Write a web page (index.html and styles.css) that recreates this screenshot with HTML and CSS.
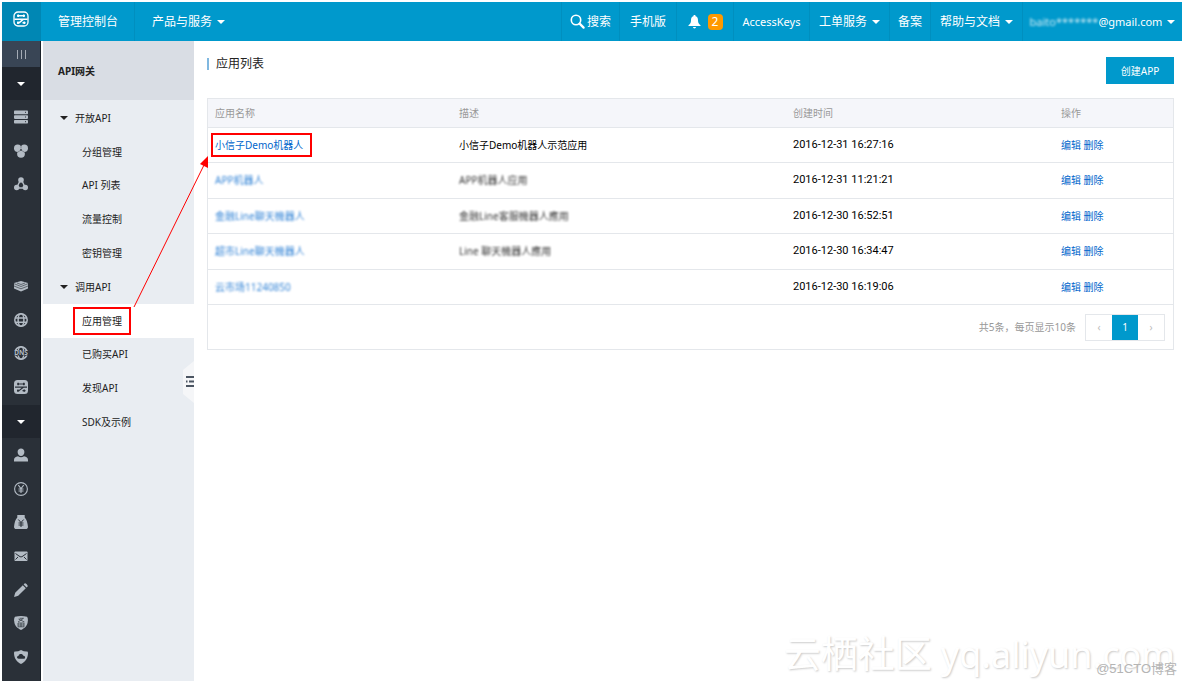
FILE: index.html
```html
<!DOCTYPE html>
<html lang="zh-CN">
<head>
<meta charset="utf-8">
<title>API网关 - 应用列表</title>
<link rel="stylesheet" href="styles.css">
</head>
<body>
<header class="topbar">
  <a class="logo" href="#" aria-label="首页">
    <svg width="16" height="16" viewBox="0 0 16 16" fill="none" stroke="#fff"><rect x="1" y="1" width="14" height="14" rx="4" stroke-width="1.300"/><path d="M4 4.800h8M1.500 8.200h13M4 11.800h2.500M9.500 11.800h3M10.500 8.200L6 11.800" stroke-width="1.500"/><path d="M5.200 3.500v2.600M10.800 3.500v2.600M5 10.500v2.400M11.300 10.500v2.400" stroke-width="1.600"/></svg>
  </a>
  <a class="nav-item console" href="#">管理控制台</a>
  <button class="nav-item products">产品与服务<span class="caret"></span></button>
  <nav class="nav-right">
    <button class="nav-item search"><svg width="15" height="15" viewBox="0 0 15 15" fill="none" stroke="#fff" stroke-linecap="round"><circle cx="6" cy="6" r="4.700" stroke-width="1.600"/><path d="M9.600 9.600l4 4" stroke-width="2.200"/></svg>搜索</button>
    <a class="nav-item phone" href="#">手机版</a>
    <a class="nav-item bell" href="#"><svg width="13" height="14" viewBox="0 0 13 14" fill="#fff"><path d="M6.500 0c.8 0 1.100.6 1.100 1.200C9.500 1.700 10 3.500 10 5.500c0 2.500.8 3.500 2.500 4.800V11H.5v-.7C2.200 9 3 8 3 5.500c0-2 .5-3.800 2.400-4.300C5.400.6 5.700 0 6.500 0zM5 12h3c0 .8-.7 1.400-1.500 1.400S5 12.800 5 12z"/></svg><span class="badge">2</span></a>
    <a class="nav-item keys latin" href="#">AccessKeys</a>
    <button class="nav-item tickets">工单服务<span class="caret"></span></button>
    <a class="nav-item record" href="#">备案</a>
    <button class="nav-item help">帮助与文档<span class="caret"></span></button>
    <button class="nav-item user latin"><span><span class="masked">baito*******</span>@gmail.com</span><span class="caret"></span></button>
  </nav>
</header>
<div class="layout">
  <aside class="rail">
    <button class="rail-toggle" aria-label="折叠"><i></i><i></i><i></i></button>
    <button class="rail-caret" aria-label="产品"><span class="caret"></span></button>
    <div class="rail-group three">
      <a href="#" aria-label="服务器"><svg viewBox="0 0 14 14"><rect y="0.500" width="14" height="3.700" rx=".8"/><rect y="5.200" width="14" height="3.700" rx=".8"/><rect y="9.900" width="14" height="3.700" rx=".8"/><path class="cut" d="M11 2.300h1M11 7h1M11 11.700h1"/></svg></a>
      <a href="#" aria-label="数据库"><svg viewBox="0 0 14 14"><circle cx="3.700" cy="4.200" r="3.700"/><circle cx="10.300" cy="4.200" r="3.700"/><circle cx="7" cy="9.800" r="3.900"/><path d="M4 2h6v6H4z"/><circle cx="7" cy="6" r=".9" fill="#2a3038"/><path class="cut" d="M3.200 8.500L6 6.700M10.800 8.500L8 6.700M7 1v3.500" stroke-width=".4"/></svg></a>
      <a href="#" aria-label="网络"><svg viewBox="0 0 14 14"><path class="line" d="M6 4l-3 6M8 4l3 6M3 11h8" stroke-width="1.500"/><circle cx="7" cy="3" r="2.800"/><circle cx="2.700" cy="10.500" r="2.700"/><circle cx="11.300" cy="10.500" r="2.700"/></svg></a>
    </div>
    <div class="rail-group four">
      <a href="#" aria-label="存储"><svg viewBox="0 0 14 14"><path d="M0 4l7-2 7 2v5.500L7 12.500 0 9.500z"/><path class="cut" d="M0 4.700l7 2.800 7-2.800M0 7l7 2.800L14 7M3 4l4 1.500L11 4" stroke-width=".6"/></svg></a>
      <a href="#" aria-label="全球加速"><svg viewBox="0 0 14 14"><g class="line" stroke-width="1.500"><circle cx="7" cy="7" r="6.200"/><ellipse cx="7" cy="7" rx="2.900" ry="6.200"/><path d="M1 5h12M1 9.200h12"/></g></svg></a>
      <a href="#" aria-label="域名解析"><svg viewBox="0 0 14 14"><g class="line" stroke-width="1.500"><circle cx="7" cy="7" r="6.200"/><ellipse cx="7" cy="7" rx="2.900" ry="6.200"/></g><rect y="4.500" width="14" height="5" fill="#2a3038"/><text x="7" y="9.300" text-anchor="middle" font-size="6.500" font-weight="bold">DNS</text></svg></a>
      <a href="#" aria-label="API网关"><svg viewBox="0 0 14 14"><rect width="14" height="14" rx="3.500"/><path class="cut" d="M3 4h8M1 7.200h12M3 10.600h2.500M8.500 10.600h3M9.300 7.200L5 10.600" stroke-width="1.200"/><path class="cut" d="M4.200 2.800v2.400M9.800 2.800v2.400M4 9.400v2.400M10.200 9.400v2.400" stroke-width="1.500"/></svg></a>
    </div>
    <button class="rail-caret" aria-label="用户"><span class="caret"></span></button>
    <div class="rail-group seven">
      <a href="#" aria-label="账号"><svg viewBox="0 0 14 14"><path d="M7 0.500c2 0 3.400 1.500 3.400 3.500S9 8 7 8 3.600 6 3.600 4 5 .5 7 .5zM4 8.300c1.800 1.300 4.200 1.300 6 0 2.500.6 4 1.600 4 3.700v1.500H0V12c0-2.100 1.500-3.100 4-3.700z"/></svg></a>
      <a href="#" aria-label="费用"><svg viewBox="0 0 14 14"><g class="line" stroke-width="1.100"><circle cx="7" cy="7" r="6.400"/><path d="M4.300 3.200L7 6.700l2.700-3.500M7 6.700V11M4.500 7h5M4.500 9h5"/></g></svg></a>
      <a href="#" aria-label="续费"><svg viewBox="0 0 14 14"><path d="M3.300 0h7.400v2.500c2 2 2.800 5 3.300 9.500-.3 1.500-1 2-2 2H2c-1 0-1.700-.5-2-2 .5-4.500 1.300-7.500 3.300-9.500z"/><path class="cut" d="M4.300 4.500L7 7.500l2.700-3M7 7.500V12M4.500 8h5M4.500 10h5"/></svg></a>
      <a href="#" aria-label="消息"><svg viewBox="0 0 14 14"><rect x="0.500" y="2.500" width="13" height="9.500" rx=".7"/><path class="cut" d="M1.500 4.500L5 7c1.500 1.200 2.500 1.200 4 0l3.500-2.500M1.500 10.500L4 8M12.500 10.500L10 8"/></svg></a>
      <a href="#" aria-label="工单"><svg viewBox="0 0 14 14"><path d="M8.800 2.200l3 3L4.200 12.800 0 14l1.200-4.200zM9.600 1.400l1-1c.9-.8 3.800 2.100 3 3l-1 1z"/></svg></a>
      <a href="#" aria-label="备案"><svg viewBox="0 0 14 14"><path d="M1 .8Q7-.8 13 .8q1 .7.900 3.800C13.600 10 11 12 7 14 3 12 .4 10 .1 4.600Q0 1.500 1 .8z"/><path class="cut" d="M5.500 2.300h4L4 6M4.500 3l6 3M4 7h6v3.800H4zM7 7v4M4 9h6" stroke-width=".7"/></svg></a>
      <a href="#" aria-label="安全"><svg viewBox="0 0 14 14"><path d="M7 0q3 1.700 6.300 1.500.7.200.7 2C13.600 9 11 12 7 14 3 12 .4 9 0 3.500q0-1.800.7-2Q4 1.700 7 0z"/><path d="M4.700 8.700C2.500 8.700 2.500 6 4.500 6 4.700 3.500 8.700 3.500 9.400 5.700 11.800 5.800 11.500 8.700 10 8.700z" fill="#2a3038"/></svg></a>
    </div>
  </aside>
  <aside class="sidebar">
    <h2>API网关</h2>
    <nav class="menu">
      <button class="menu-group"><span class="caret"></span>开放API</button>
      <a href="#">分组管理</a>
      <a href="#">API 列表</a>
      <a href="#">流量控制</a>
      <a href="#">密钥管理</a>
      <button class="menu-group"><span class="caret"></span>调用API</button>
      <a href="#" class="active"><span class="marked">应用管理</span></a>
      <a href="#">已购买API</a>
      <a href="#">发现API</a>
      <a href="#">SDK及示例</a>
    </nav>
    <button class="handle" aria-label="收起菜单"><svg width="11" height="42" viewBox="0 0 11 42"><path d="M11 0L0 9v24l11 9z" fill="#f5f6f8"/><path d="M3 16h8M6 20.500h5M3 25h8" stroke="#4b5562" stroke-width="2"/><path d="M3 20.500h1.500" stroke="#4b5562" stroke-width="2"/></svg></button>
  </aside>
  <main class="content">
    <div class="heading"><h1>应用列表</h1><button class="create">创建APP</button></div>
    <section class="panel">
      <table>
        <thead><tr><th class="c-name">应用名称</th><th class="c-desc">描述</th><th class="c-time">创建时间</th><th class="c-op">操作</th></tr></thead>
        <tbody>
          <tr><td><a class="marked" href="#">小信子Demo机器人</a></td><td>小信子Demo机器人示范应用</td><td class="time">2016-12-31 16:27:16</td><td><a href="#">编辑</a> <a href="#">删除</a></td></tr>
          <tr><td><a class="masked" href="#">APP机器人</a></td><td><span class="masked">APP机器人应用</span></td><td class="time">2016-12-31 11:21:21</td><td><a href="#">编辑</a> <a href="#">删除</a></td></tr>
          <tr><td><a class="masked" href="#">金融Line聊天機器人</a></td><td><span class="masked">金融Line客服機器人應用</span></td><td class="time">2016-12-30 16:52:51</td><td><a href="#">编辑</a> <a href="#">删除</a></td></tr>
          <tr><td><a class="masked" href="#">超市Line聊天機器人</a></td><td><span class="masked">Line 聊天機器人應用</span></td><td class="time">2016-12-30 16:34:47</td><td><a href="#">编辑</a> <a href="#">删除</a></td></tr>
          <tr><td><a class="masked" href="#">云市场11240850</a></td><td></td><td class="time">2016-12-30 16:19:06</td><td><a href="#">编辑</a> <a href="#">删除</a></td></tr>
        </tbody>
      </table>
      <footer class="pager"><span>共5条，每页显示10条</span><div class="pages"><button>‹</button><button class="current">1</button><button>›</button></div></footer>
    </section>
  </main>
</div>
<svg class="arrow" width="80" height="154" viewBox="0 0 80 154"><path d="M1 152L72 8" stroke="#f00" fill="none"/><path d="M75 1L67 9l8 4z" fill="#f00"/></svg>
<div class="watermark"><span class="wm-cn">云栖社区</span><span class="wm-url">yq.aliyun.com</span></div>
<div class="credit">@51CTO博客</div>
</body>
</html>
```

FILE: styles.css
```css
* { box-sizing: border-box; }
body {
  margin: 0;
  padding: 2px;
  height: 100vh;
  display: flex;
  flex-direction: column;
  position: relative;
  overflow: hidden;
  background: #fff;
  color: #222;
  font: 10px/16px "Noto Sans", "Noto Sans CJK SC", sans-serif;
}
a { color: #06c; text-decoration: none; }
button { font: inherit; color: inherit; background: none; border: 0; padding: 0; margin: 0; cursor: pointer; }
h1, h2 { margin: 0; }
.caret { width: 0; height: 0; border: 4px solid transparent; border-top-color: currentColor; border-bottom: 0; }
.masked { filter: blur(1px); opacity: .8; display: inline-block; }

.topbar { display: flex; flex: none; height: 39px; background: #09c; color: #fff; font-size: 12px; }
.logo { width: 39px; display: flex; justify-content: center; padding: 9px 2px 0 0; background: #0087b4; }
.nav-item { display: flex; align-items: center; color: #fff; white-space: nowrap; }
.console { padding: 0 16px 0 17px; border-right: 1px solid #008fbf; }
.products { padding: 0 17px; gap: 5px; }
.nav-right { margin-left: auto; display: flex; }
.nav-right .nav-item { justify-content: center; border-left: 1px solid #008fbf; gap: 5px; }
.nav-right .search { width: 58px; gap: 2px; }
.phone, .bell { width: 57px; }
.nav-right .bell { gap: 7px; }
.keys { width: 76px; }
.tickets { width: 80px; }
.record { width: 41px; }
.help { width: 92px; }
.user { width: 160px; }
.latin { font-size: 11px; }
.badge { width: 15px; line-height: 16px; border-radius: 4px; background: #f90; text-align: center; }

.layout { display: flex; flex: 1; min-height: 0; }
.rail { width: 39px; flex: none; display: flex; flex-direction: column; background: #2a3038; border-right: 1px solid #1a2129; color: #fff; }
.rail-toggle { height: 26px; flex: none; display: flex; justify-content: center; align-items: center; gap: 3px; background: #394555; }
.rail-toggle i { width: 1px; height: 9px; background: #a4abb5; }
.rail-caret { height: 33px; flex: none; display: flex; justify-content: center; align-items: center; background: #21262e; }
.rail-group { display: flex; flex-direction: column; flex: none; }
.rail-group a { flex: 1; display: flex; justify-content: center; align-items: center; }
.rail-group svg { width: 14px; height: 14px; fill: #b3bbc4; }
.rail-group .line { stroke: #b3bbc4; fill: none; }
.rail-group .cut { stroke: #2a3038; fill: none; }
.three { height: 101px; margin-bottom: 68px; }
.four { height: 135px; margin-bottom: 1px; }
.seven { height: 236px; }

.sidebar { width: 151px; flex: none; margin-left: 2px; background: #e9edf2; position: relative; }
.sidebar h2 { height: 59px; line-height: 60px; padding-left: 15px; font-size: 10px; background: #d9dde4; }
.menu { display: flex; flex-direction: column; height: 338px; margin-top: 1px; }
.menu > * { flex: 1; display: flex; align-items: center; color: #222; }
.menu > a { padding-left: 39px; }
.menu-group { gap: 7px; padding-left: 17px; }
.menu .active { background: #fff; }
.handle { position: absolute; right: 0; top: 320px; height: 42px; }
.handle svg { display: block; }
.marked { position: relative; }
.marked::after { content: ""; position: absolute; inset: -6px -9px; border: 2px solid #f00; }
td .marked::after { inset: -5px -9px -5px -4px; }

.content { flex: 1; min-width: 0; padding: 16px 8px 0 13px; }
.heading { display: flex; justify-content: space-between; align-items: flex-start; height: 41px; }
h1 { border-left: 2px solid #80b8e0; font-size: 12px; font-weight: 400; line-height: 12px; padding-left: 7px; margin-top: 1px; }
.create { width: 68px; height: 27px; background: #09c; color: #fff; }
.panel { border: 1px solid #e4e7eb; }
table { width: 100%; height: 206px; table-layout: fixed; border-collapse: collapse; color: #000; }
th, td { text-align: left; padding: 0 7px; border-bottom: 1px solid #e4e7eb; }
th { height: 28px; background: #f5f6fa; color: #999; font-weight: 400; }
.c-name { width: 244px; }
.c-op { width: 119px; }
.c-time { width: 268px; }
.time { font-family: Roboto, sans-serif; font-size: 11px; }
.pager { display: flex; justify-content: flex-end; align-items: center; gap: 9px; height: 44px; padding-right: 8px; color: #999; }
.pages { display: flex; border: 1px solid #e4e7eb; }
.pages button { width: 26px; height: 25px; color: #bbb; }
.pages .current { background: #09c; color: #fff; }

.arrow { position: absolute; left: 133px; top: 155px; pointer-events: none; }
.watermark { position: absolute; right: 9px; bottom: 3px; display: flex; gap: 9px; align-items: baseline; line-height: 50px; color: #fff; text-shadow: 1px 1px 2px #ccc; white-space: nowrap; }
.wm-cn { font-size: 37px; }
.wm-url { font-size: 36px; }
.credit { position: absolute; right: 7px; bottom: 6px; font: 13px/16px "Liberation Sans", "Noto Sans CJK SC", sans-serif; color: #b5b5b5; }
```
